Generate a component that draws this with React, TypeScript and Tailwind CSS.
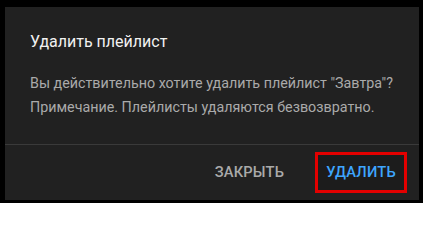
import React from "react";

export default function App() {
  return (
    <div className="w-[423px] h-[203px] bg-black pl-[5px] pt-[7px] overflow-hidden font-['Roboto','Noto_Sans',sans-serif]">
      <div className="w-[414px] h-[193px] bg-[#212121] flex flex-col">
        <div className="flex-1 pl-[25px] pt-[23px]">
          <div className="text-[16px] leading-[24px] text-[#f1f1f1] font-normal whitespace-nowrap">Удалить плейлист</div>
          <div className="mt-[17px] text-[14.3px] leading-[24px] text-[#aaaaaa] whitespace-nowrap">
            <div>Вы действительно хотите удалить плейлист "Завтра"?</div>
            <div>Примечание. Плейлисты удаляются безвозвратно.</div>
          </div>
        </div>
        <div className="h-[56px] border-t border-[#3a3a3a] flex items-center justify-end pr-[12px] gap-[31px]">
          <span className="text-[14.7px] font-medium text-[#aaaaaa] tracking-[0.01em]">ЗАКРЫТЬ</span>
          <div className="w-[92px] h-[41px] border-[3px] border-[#e30000] bg-[#1c1c1c] flex items-center justify-center">
            <span className="text-[14.7px] font-medium text-[#3ea6ff] tracking-[0.01em]">УДАЛИТЬ</span>
          </div>
        </div>
      </div>
    </div>
  );
}
